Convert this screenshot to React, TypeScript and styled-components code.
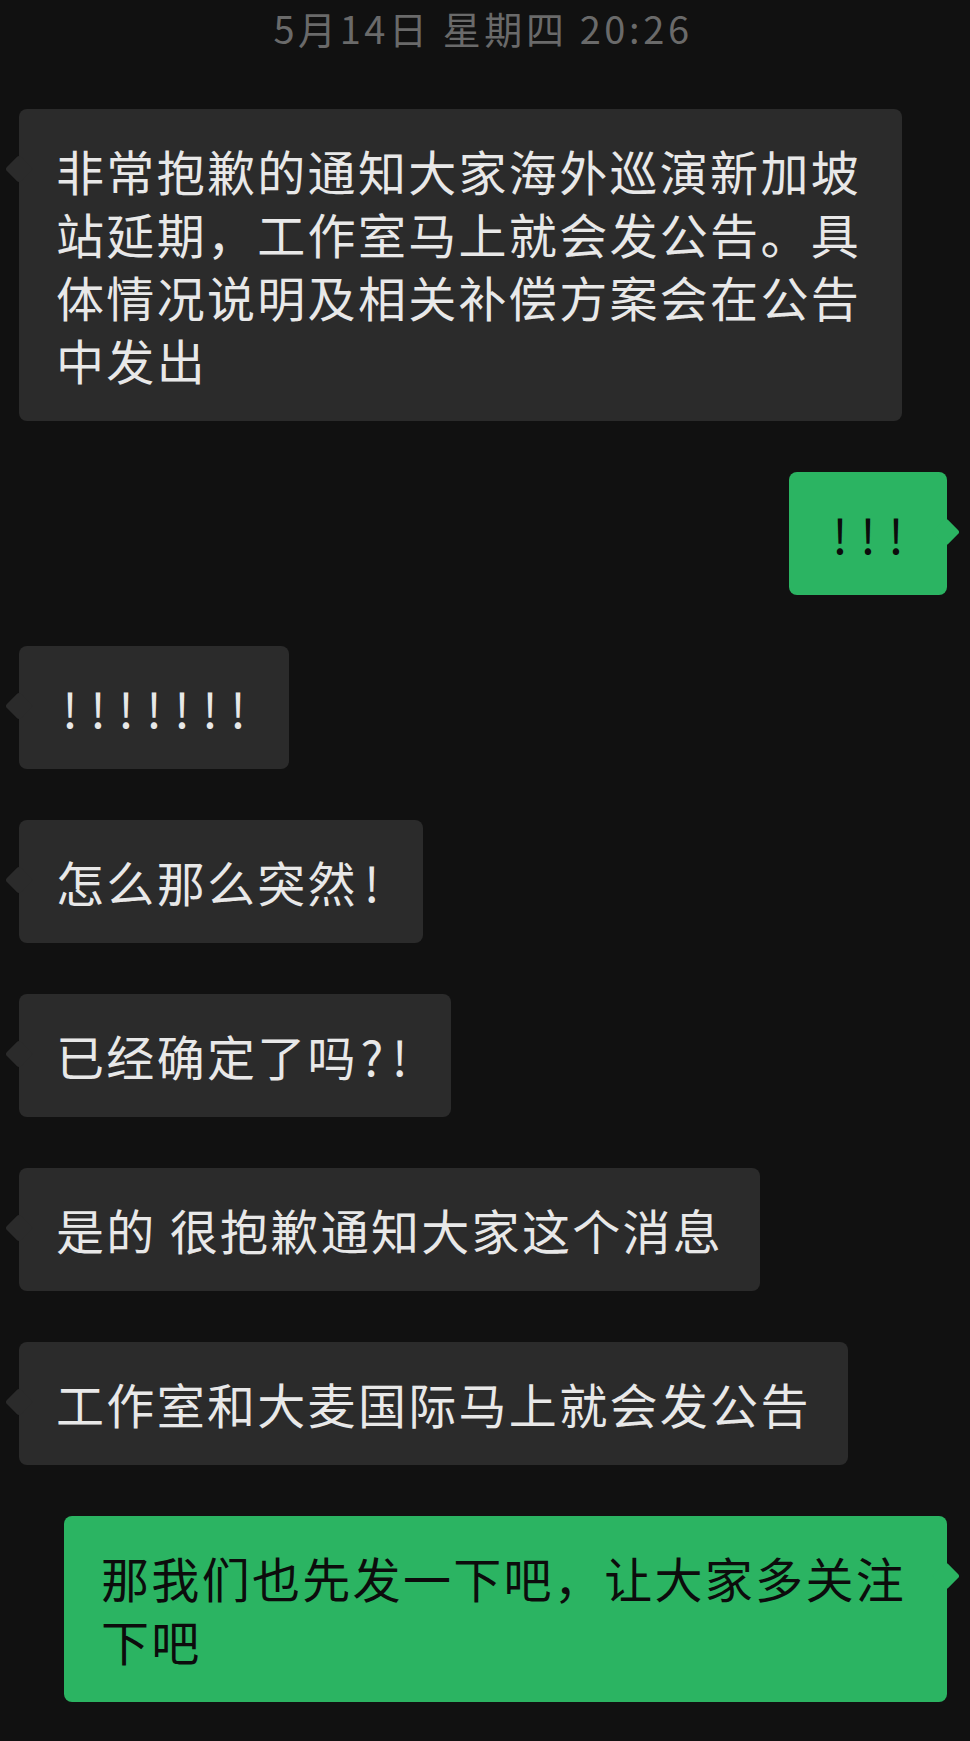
import styled, { createGlobalStyle, css } from "styled-components";

const GlobalStyle = createGlobalStyle`
  body {
    margin: 0;
    background: #111111;
  }
`;

const Screen = styled.div`
  width: 970px;
  min-height: 1741px;
  box-sizing: border-box;
  background: #111111;
  padding: 8px 23px 0 19px;
  display: flex;
  flex-direction: column;
  font-family: "Noto Sans CJK SC", "Noto Sans", sans-serif;
`;

const TimeStamp = styled.div`
  height: 40px;
  line-height: 40px;
  margin-bottom: 61px;
  text-align: center;
  font-size: 38px;
  letter-spacing: 3.6px;
  color: #6a6a6a;
`;

const Messages = styled.div`
  display: flex;
  flex-direction: column;
  gap: 51px;
`;

const Row = styled.div<{ $mine?: boolean }>`
  display: flex;
  justify-content: ${(p) => (p.$mine ? "flex-end" : "flex-start")};
`;

const Bubble = styled.div<{ $mine?: boolean }>`
  position: relative;
  max-width: 883px;
  box-sizing: border-box;
  padding: 30px 37px;
  border-radius: 8px;
  font-size: 48px;
  line-height: 63px;
  letter-spacing: 2.3px;
  background: ${(p) => (p.$mine ? "#2bb462" : "#2b2b2b")};
  color: ${(p) => (p.$mine ? "#0c0c0c" : "#e8e8e8")};

  &::before {
    content: "";
    position: absolute;
    top: 50px;
    width: 20px;
    height: 20px;
    border-radius: 3px;
    background: inherit;
    transform: rotate(45deg);
    ${(p) =>
      p.$mine
        ? css`
            right: -9px;
          `
        : css`
            left: -10px;
          `}
  }
`;

const Punct = styled.span`
  display: inline-block;
  width: 28px;
  text-align: center;
  letter-spacing: 0;
`;

type Msg = { mine?: boolean; text: string };

const messages: Msg[] = [
  {
    text: "非常抱歉的通知大家海外巡演新加坡站延期，工作室马上就会发公告。具体情况说明及相关补偿方案会在公告中发出",
  },
  { mine: true, text: "!!!" },
  { text: "!!!!!!!" },
  { text: "怎么那么突然!" },
  { text: "已经确定了吗?!" },
  { text: "是的 很抱歉通知大家这个消息" },
  { text: "工作室和大麦国际马上就会发公告" },
  { mine: true, text: "那我们也先发一下吧，让大家多关注下吧" },
];

function renderText(text: string) {
  return text.split("").map((ch, i) =>
    ch === "!" || ch === "?" ? <Punct key={i}>{ch}</Punct> : ch
  );
}

function App() {
  return (
    <>
      <GlobalStyle />
      <Screen>
        <TimeStamp>5月14日 星期四 20:26</TimeStamp>
        <Messages>
          {messages.map((m, i) => (
            <Row key={i} $mine={m.mine}>
              <Bubble $mine={m.mine}>{renderText(m.text)}</Bubble>
            </Row>
          ))}
        </Messages>
      </Screen>
    </>
  );
}

export default App;
